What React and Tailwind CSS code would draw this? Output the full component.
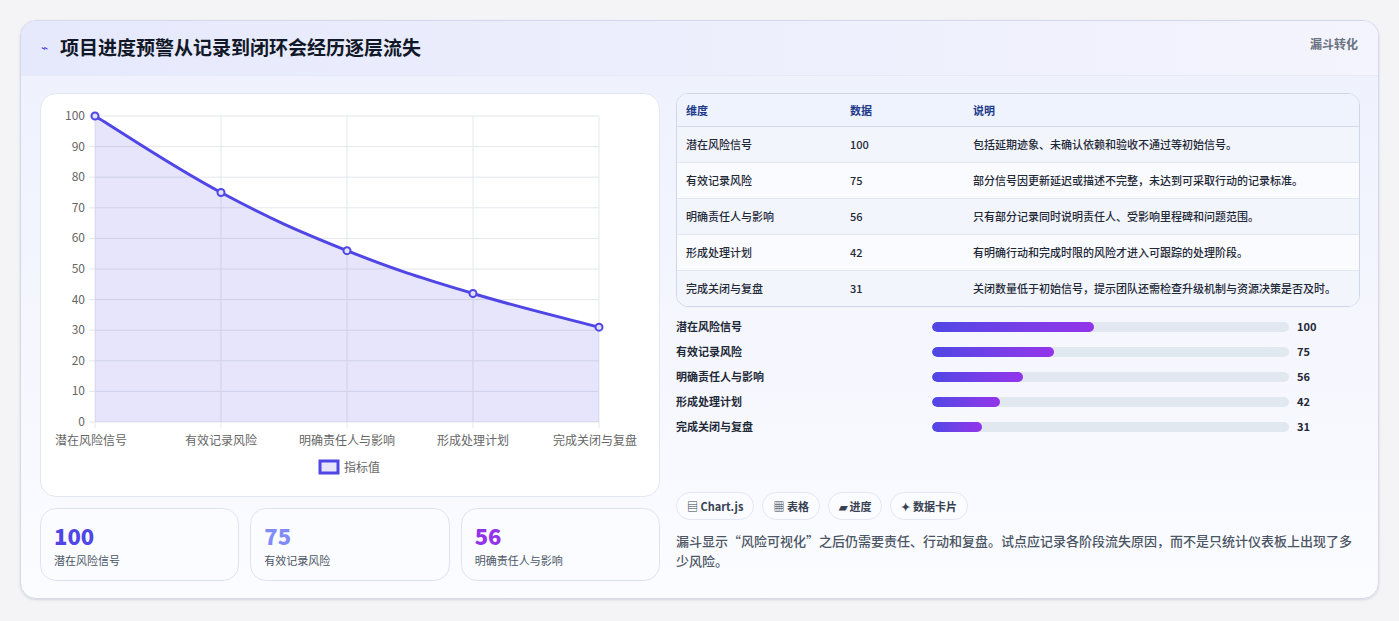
const labels = ["潜在风险信号", "有效记录风险", "明确责任人与影响", "形成处理计划", "完成关闭与复盘"];
const values = [100, 75, 56, 42, 31];
const notes = [
  "包括延期迹象、未确认依赖和验收不通过等初始信号。",
  "部分信号因更新延迟或描述不完整，未达到可采取行动的记录标准。",
  "只有部分记录同时说明责任人、受影响里程碑和问题范围。",
  "有明确行动和完成时限的风险才进入可跟踪的处理阶段。",
  "关闭数量低于初始信号，提示团队还需检查升级机制与资源决策是否及时。",
];

function smoothPath(pts, t = 0.2) {
  let d = `M${pts[0][0]},${pts[0][1]}`;
  for (let i = 0; i < pts.length - 1; i++) {
    const p0 = pts[i - 1] || pts[i];
    const p1 = pts[i];
    const p2 = pts[i + 1];
    const p3 = pts[i + 2] || p2;
    const c1 = [p1[0] + (p2[0] - p0[0]) * t, p1[1] + (p2[1] - p0[1]) * t];
    const c2 = [p2[0] - (p3[0] - p1[0]) * t, p2[1] - (p3[1] - p1[1]) * t];
    d += ` C${c1[0]},${c1[1]} ${c2[0]},${c2[1]} ${p2[0]},${p2[1]}`;
  }
  return d;
}

function Chart() {
  const x0 = 54, x1 = 558, y0 = 22, y1 = 328;
  const pts = values.map((v, i) => [x0 + ((x1 - x0) * i) / 4, y1 - ((y1 - y0) * v) / 100]);
  const line = smoothPath(pts);
  return (
    <svg width="618" height="401" className="block">
      {Array.from({ length: 11 }).map((_, i) => {
        const y = y1 - ((y1 - y0) * i) / 10;
        return (
          <g key={i}>
            <line x1={x0 - 6} x2={x1} y1={y} y2={y} stroke="#e5e7eb" />
            <text x={x0 - 10} y={y + 4} textAnchor="end" fontSize="12" fill="#666">{i * 10}</text>
          </g>
        );
      })}
      {pts.map(([x], i) => (
        <g key={i}>
          <line x1={x} x2={x} y1={y0} y2={y1 + 6} stroke="#e5e7eb" />
          <text x={i === 0 ? x - 40 : i === 4 ? x - 46 : x} y={y1 + 23} textAnchor={i === 0 || i === 4 ? "start" : "middle"} fontSize="12" fill="#666">{labels[i]}</text>
        </g>
      ))}
      <path d={`${line} L${x1},${y1} L${x0},${y1} Z`} fill="rgba(79,70,229,0.14)" />
      <path d={line} fill="none" stroke="#4f46e5" strokeWidth="3" />
      {pts.map(([x, y], i) => (
        <circle key={i} cx={x} cy={y} r="3.5" fill="#e0e0f8" stroke="#4f46e5" strokeWidth="2" />
      ))}
      <rect x="279" y="367" width="18" height="12" fill="rgba(79,70,229,0.14)" stroke="#4f46e5" strokeWidth="3" />
      <text x="303" y="378" fontSize="12" fill="#666">指标值</text>
    </svg>
  );
}

export default function App() {
  return (
    <div className="min-h-screen bg-[#f4f4f6] p-5 pb-0" style={{ fontFamily: '"Noto Sans CJK SC", "Noto Sans", sans-serif' }}>
      <div className="h-[579px] rounded-2xl border border-[#d4d9ee] bg-gradient-to-b from-[#eef0fd] to-[#fbfcff] overflow-hidden shadow-sm">
        {/* header */}
        <div className="h-[55px] flex items-start justify-between px-5 pt-[14px] bg-gradient-to-r from-[#e6e9fc] to-[#f3f4fd] border-b border-[#e6e9f6]">
          <div className="flex items-center gap-3">
            <span className="text-[#4f46e5] text-xs">⌁</span>
            <h1 className="text-[19px] font-bold text-[#111827] leading-6">项目进度预警从记录到闭环会经历逐层流失</h1>
          </div>
          <span className="text-[12px] font-semibold text-[#6b7280]">漏斗转化</span>
        </div>
        <div className="flex gap-4 pl-[19px] pr-[18px] pt-[17px]">
          {/* left */}
          <div className="w-[620px] flex flex-col gap-[11px]">
            <div className="h-[404px] rounded-2xl bg-white border border-[#e3e7f2]">
              <Chart />
            </div>
            <div className="grid grid-cols-3 gap-[11px]">
              {[["100", "text-[#4f46e5]"], ["75", "text-[#818cf8]"], ["56", "text-[#9333ea]"]].map(([v, c], i) => (
                <div key={i} className="h-[73px] rounded-2xl border border-[#dde3f2] bg-[#fbfcff] px-[13px] pt-[12px]">
                  <div className={`text-[22px] font-extrabold leading-7 ${c}`}>{v}</div>
                  <div className="text-[11px] text-[#4b5563] mt-[3px]">{labels[i]}</div>
                </div>
              ))}
            </div>
          </div>
          {/* right */}
          <div className="flex-1 flex flex-col">
            <div className="rounded-xl border border-[#cfd6ea] overflow-hidden bg-white text-[11px] text-[#1f2937]">
              <div className="flex h-[33px] items-center bg-[#eef3fe] border-b border-[#d3daec] text-[#1e3a8a] font-semibold">
                <div className="w-[173px] pl-[9px]">维度</div>
                <div className="w-[123px]">数据</div>
                <div className="flex-1">说明</div>
              </div>
              {labels.map((l, i) => (
                <div key={i} className={`flex py-[9px] ${i % 2 ? "bg-[#fafbfe]" : "bg-[#f3f5fd]"} ${i < 4 ? "border-b border-[#e3e7f2]" : ""}`}>
                  <div className="w-[173px] pl-[9px] font-medium leading-[17px]">{l}</div>
                  <div className="w-[123px] font-medium leading-[17px]">{values[i]}</div>
                  <div className="w-[370px] font-medium leading-[17px]">{notes[i]}</div>
                </div>
              ))}
            </div>
            <div className="flex flex-col gap-[8px] mt-[11px]">
              {labels.map((l, i) => (
                <div key={i} className="flex items-center h-[17px] text-[11px] font-semibold text-[#1f2937]">
                  <div className="w-[256px]">{l}</div>
                  <div className="w-[357px] h-[10px] rounded-full bg-[#e2e8f0] overflow-hidden">
                    <div className="h-full rounded-full bg-gradient-to-r from-[#4f46e5] to-[#9333ea]" style={{ width: `${values[i] * 0.455}%` }} />
                  </div>
                  <div className="pl-2">{values[i]}</div>
                </div>
              ))}
            </div>
            <div className="flex gap-2 mt-[57px] text-[11px] font-semibold text-[#374151]">
              {["▤ Chart.js", "▦ 表格", "▰ 进度", "✦ 数据卡片"].map((t) => (
                <span key={t} className="h-[28px] px-[10px] flex items-center rounded-full border border-[#e3e7f2] bg-[#fbfcff]">{t}</span>
              ))}
            </div>
            <p className="mt-[11px] text-[13px] leading-[20px] font-medium text-[#4b5563] pr-2">
              漏斗显示“风险可视化”之后仍需要责任、行动和复盘。试点应记录各阶段流失原因，而不是只统计仪表板上出现了多少风险。
            </p>
          </div>
        </div>
      </div>
    </div>
  );
}
